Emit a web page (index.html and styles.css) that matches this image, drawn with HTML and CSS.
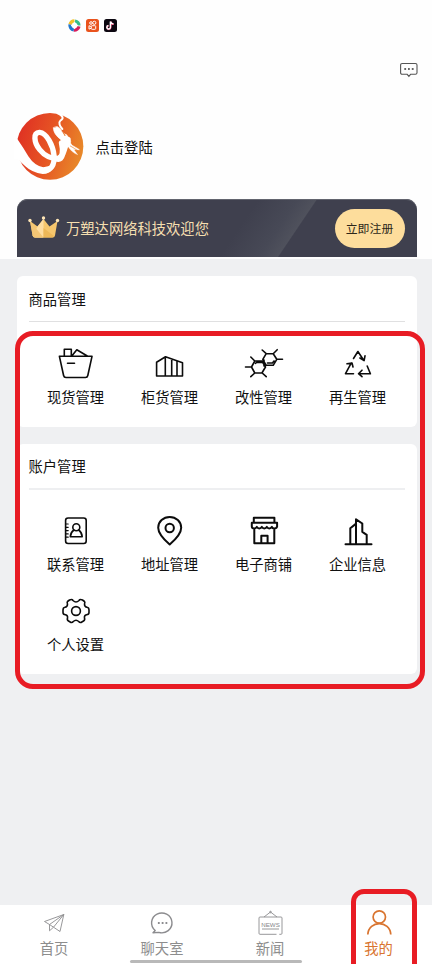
FILE: index.html
```html
<!DOCTYPE html>
<html lang="zh-CN">
<head>
<meta charset="utf-8">
<meta name="viewport" content="width=device-width, initial-scale=1">
<title>我的</title>
<link rel="stylesheet" href="styles.css">
</head>
<body>
<div class="app">
  <header class="top">
    <div class="status">
      <svg width="13" height="13" viewBox="0 0 13 13" fill="none" stroke-width="3.2">
        <path d="M2 5.5A4.8 4.8 0 0 1 6.5 1.9" stroke="#f2c12e"/>
        <path d="M7 2A4.8 4.8 0 0 1 11 6.5" stroke="#35bd8b"/>
        <path d="M11 7.3A4.8 4.8 0 0 1 5.8 11" stroke="#d81f5c"/>
        <path d="M5.8 11A4.8 4.8 0 0 1 2 5.5" stroke="#2176cf"/>
        <path d="M6.500 2.800l3.700 3.700-3.700 3.700-3.700-3.700z" fill="#fff"/>
      </svg>
      <svg width="13" height="13" viewBox="0 0 13 13" fill="none" stroke="#fff">
        <rect width="13" height="13" rx="2.5" fill="#e9531d" stroke="none"/>
        <circle cx="5" cy="4" r="1.3"/><circle cx="8.3" cy="3.8" r="1.6"/>
        <rect x="5.3" y="6.7" width="4.4" height="3.6" rx=".8"/><path d="M5 7.5l-2-.8v3.4l2-.8"/>
      </svg>
      <svg width="13" height="13" viewBox="0 0 13 13" fill="none">
        <rect width="13" height="13" rx="2.5" fill="#0c0710"/>
        <path d="M6.4 2.5v5.8a1.8 1.8 0 1 1-2-1.8M6.6 2.6q.5 2 2.8 2.3" stroke="#e6396a" stroke-width="1.5" transform="translate(.4 .3)"/>
        <path d="M6.4 2.5v5.8a1.8 1.8 0 1 1-2-1.8M6.6 2.6q.5 2 2.8 2.3" stroke="#fff" stroke-width="1.5"/>
      </svg>
    </div>
    <svg class="message" width="20" height="16" viewBox="0 0 20 16" fill="none" stroke="#555" stroke-width="1.1">
      <path d="M3.2 1.5h13.2q1.6 0 1.6 1.6v7.6q0 1.6-1.6 1.6h-4.8l-1.7 2-1.7-2h-5q-1.6 0-1.6-1.6V3.1q0-1.6 1.6-1.6z"/>
      <path d="M5.3 7h1.8M9 7h1.8M12.8 7h1.8" stroke="#333" stroke-width="1.6"/>
    </svg>
    <div class="profile">
      <svg width="72" height="72" viewBox="0 0 216 216">
        <defs>
          <linearGradient id="flame" x1="0" y1=".3" x2="1" y2=".6"><stop offset="0" stop-color="#df3023"/><stop offset=".5" stop-color="#e65524"/><stop offset="1" stop-color="#e88a29"/></linearGradient>
        </defs>
        <circle cx="108" cy="109" r="100" fill="url(#flame)"/>
        <g fill="none" stroke="#fff" stroke-linecap="round" stroke-linejoin="round">
          <path d="M0 70L10 87Q28 113 43 139Q62 168 88 172L106 168L116 174Q108 192 86 192Q54 188 34 169Q20 157 12 147L0 148z" fill="#fff" stroke="none"/>
          <path d="M86 181C111 184 123 164 120 136C117 106 98 69 77 67C56 66 60 98 77 119C91 137 113 148 133 145C151 139 151 111 162 88" stroke-width="16"/>
          <path d="M127 146C149 154 148 119 143 99" stroke-width="17"/>
          <path d="M118 54C119 69 128 79 141 89L146 103L161 89L158 75L145 68L139 56L130 50z" fill="#fff" stroke-width="2"/>
          <path d="M130 9C151 19 148 27 139 32C133 37 137 49 145 57" stroke-width="6"/>
          <path d="M158 75L170 93C167 107 181 108 196 119C178 120 167 115 157 104Z" fill="#fff" stroke-width="2"/>
          <path d="M160 106Q173 129 191 134Q179 115 166 106" fill="#fff" stroke-width="1"/>
          <path d="M149 70L153 77" stroke="#e97927" stroke-width="3"/>
          <path d="M169 108Q182 115 191 122" stroke="#e97927" stroke-width="2"/>
        </g>
      </svg>
      <span class="login">点击登陆</span>
    </div>
    <section class="banner">
      <svg class="crown" width="32" height="24" viewBox="0 0 32 24">
        <path d="M2 5l7.5 5.5L15.5 3l6 7.5L29.500 5 27 19.500q-.5 2-2 2H7q-2 0-2.400-2z" fill="#f6c66d"/>
        <path d="M15.500 3v18.500H7q-2 0-2.400-2L9.500 10.500z" fill="#ffdda0"/>
        <path d="M15.500 12l10.500 8-1.500 1.500h-9z" fill="#eeb858"/>
        <path d="M2 5l13.500 16.500H7q-2 0-2.400-2z" fill="#f4c675"/>
        <g fill="#ffe6b6"><circle cx="2" cy="4.500" r="1.700"/><circle cx="15.500" cy="2" r="1.700"/><circle cx="29.500" cy="4.500" r="1.700"/></g>
      </svg>
      <span class="welcome">万塑达网络科技欢迎您</span>
      <button class="register">立即注册</button>
    </section>
  </header>

  <main class="content">
    <section class="card goods">
      <h2>商品管理</h2>
      <div class="grid">
        <a class="item"><svg class="icon" viewBox="0 0 40 40"><path d="M3.400 12.300H36L31.800 31.500q-.4 2-2.300 2H10q-2 0-2.400-2zM8.300 12V5.300h7V12M15.800 12l5-6.200 10.500 6.200M11.500 19.200h7"/></svg>现货管理</a>
        <a class="item"><svg class="icon" viewBox="0 0 40 40"><path d="M6.600 18.300l8.900-5.500 17 6V32H6.600zM15.300 13v19M21.700 15v17M27 17v15"/></svg>柜货管理</a>
        <a class="item"><svg class="icon" viewBox="0 0 40 40"><path d="M7.500 23l3.300-6h7.100l3.600 6-3.600 6h-7.100zM18.800 15.300l3.400-5.600h7l3.600 5.600-3.600 6h-7zM1.500 23h6M10.800 17l-4-4M10.800 29l-4 3.700M18.200 29l4 3.700M32.800 15.300h5.700M22.200 9.700l-4-3.700M29.200 9.700l4-4M11.500 19.300l1-.8h5.200M23.500 19h5l1.500-2M20 16v6"/></svg>改性管理</a>
        <a class="item"><svg class="icon" viewBox="0 0 40 40"><path d="M15.500 14.500l4.400-7 6 9M21.900 14l4.200 2.600.9-4.700M15.500 29.700h-8l5.700-10.500M9 19.800l5-.8 1 4M29.200 22l3.200 7.700H21M24 26.200l-3.500 3.500 3.500 3"/></svg>再生管理</a>
      </div>
    </section>

    <section class="card account">
      <h2>账户管理</h2>
      <div class="grid">
        <a class="item"><svg class="icon" viewBox="0 0 40 40"><rect x="9.600" y="7" width="20.600" height="25.500" rx="2.500"/><circle cx="20.300" cy="16.300" r="3.500"/><path d="M17.800 19q-3.300 2.500-3.500 6.800H26.200q-.2-4.300-3.500-6.800"/><path d="M9.500 13h2.700M9.500 16.300h2.700M9.500 19.600h2.700M9.500 22.900h2.700M9.500 26.200h2.700" stroke-width="1.200"/></svg>联系管理</a>
        <a class="item"><svg class="icon bold" viewBox="0 0 40 40"><path d="M19.700 33.500Q8.200 23.500 8.200 16.700a11.500 10.800 0 0 1 23 0Q31.200 23.500 19.700 33.500z"/><circle cx="19.700" cy="17" r="4.200"/></svg>地址管理</a>
        <a class="item"><svg class="icon bold" viewBox="0 0 40 40"><path d="M9.800 11.500V6.800h20.600v4.700M7.800 11.700h25.300v3.800q-.5 2-2.800 2-2 0-2.500-1.600-.8 1.600-2.500 1.600t-2.500-1.600q-.8 1.600-2.500 1.600t-2.500-1.600q-.8 1.600-2.500 1.600t-2.500-1.600q-.8 1.600-2.500 1.600-2.500 0-2.500-2zM10.300 17.500v14.700h20V17.500M17.300 32v-7.300h6.300V32"/></svg>电子商铺</a>
        <a class="item"><svg class="icon bold" viewBox="0 0 40 40"><path d="M7.500 33.200h26M12.300 33V17.200l5.500-4.300M18 33V8.300l6.300 4.200v8.300l4.400 3V33"/></svg>企业信息</a>
        <a class="item"><svg class="icon" viewBox="0 0 40 40"><circle cx="20" cy="20" r="4.400"/><path d="M17 9.500Q20 12.500 23 9.500Q24 7.700 26.500 9L28.500 10.500Q29.200 11.500 28.500 13Q28.500 16 31 16.200Q33 16.500 33 19V21.500Q33 23.500 30.500 23.800Q28 24.500 28.500 27Q29.200 29 27.500 30L25 31.500Q23.700 31.800 22.700 30.500Q20 28 17.300 30.500Q16.300 31.800 15 31.500L12.500 30Q10.800 29 11.500 27Q12 24.500 9.500 23.800Q7 23.500 7 21.500V19Q7 16.500 9 16.200Q11.500 16 11.500 13Q10.800 11.500 11.500 10.500L13.500 9Q16 7.700 17 9.500z"/></svg>个人设置</a>
      </div>
    </section>
  </main>

  <nav class="tabs">
    <a class="tab"><svg class="tab-icon fine" viewBox="0 0 30 30"><path d="M5.500 13.500L24.800 6.500 21 23.500l-6.500-4.300-4-2.700zM24.800 6.500l-14.300 10v6.300l4-3.600M24.800 6.500l-10.300 12.700"/></svg>首页</a>
    <a class="tab"><svg class="tab-icon" viewBox="0 0 30 30"><path d="M8.200 22.500a10.200 9.900 0 1 1 3.600 1.900l-5.800.3z"/><path d="M10.900 15h1.800M14.700 15h1.800M18.500 15h1.800" stroke-width="1.800"/></svg>聊天室</a>
    <a class="tab"><svg class="tab-icon fine" viewBox="0 0 30 30"><path d="M21.500 26.300H5q-1 0-1-1V10q0-1 1-1h21q1 0 1 1v15.300q0 1-1 1h-1.700M9 9l6.500-5 6.500 5M7 21h17"/><circle cx="15.500" cy="4" r=".8"/><text x="15.500" y="19.200">NEWS</text></svg>新闻</a>
    <a class="tab active"><svg class="tab-icon" viewBox="0 0 30 30"><circle cx="15.300" cy="9" r="6.200"/><path d="M3.800 26.500C4.600 12 26 12 26.800 26.500"/></svg>我的</a>
  </nav>

  <div class="home-bar"></div>
  <div class="mark mark-panels"></div>
  <div class="mark mark-tab"></div>
</div>
</body>
</html>
```
FILE: styles.css
```css
* { box-sizing: border-box; }
body {
  margin: 0;
  font-family: "Noto Sans CJK SC", sans-serif;
  font-size: 14.3px;
  line-height: 20px;
  color: #111;
}
svg { display: block; flex: none; }
.app {
  position: relative;
  display: flex;
  flex-direction: column;
  height: 964px;
  overflow: hidden;
  background: #eff0f2;
}
.top {
  display: flex;
  flex-direction: column;
  height: 259px;
  padding-top: 19px;
  background: #fefefe;
}
.status { display: flex; gap: 5px; height: 13px; margin-left: 68px; }
.message { align-self: flex-end; margin: 30px 13px 0 0; }
.profile { display: flex; align-items: center; gap: 9.500px; margin: 32px 0 0 14px; }
.login { margin-top: 1px; }
.banner {
  display: flex;
  align-items: center;
  height: 58px;
  margin: 17px 15.500px 0 16.500px;
  padding: 0 12px 0 11px;
  border-radius: 11px 11px 0 0;
  background: linear-gradient(124deg, #3f404e 0 55%, #474956 64%, #4f515c 68.200%, #3f404e 68.500%);
  box-shadow: inset 0 1px 0 #62646e;
}
.welcome { margin-left: 6.500px; color: #f5dfb0; }
.register {
  width: 70px;
  height: 39px;
  margin-left: auto;
  padding: 0 0 1px;
  border: 0;
  border-radius: 20px;
  background: #fddd9c;
  color: #2c2719;
  font: 11.900px/20px "Noto Sans CJK SC", sans-serif;
}
.content { flex: 1; padding: 17px 15.500px 0 16.500px; }
.card { padding: 0 12px; border-radius: 6px; background: #fff; }
.card h2 {
  height: 46px;
  margin: 0;
  padding-top: 13px;
  border-bottom: 1px solid #e0e0e1;
  font-size: 14.300px;
  font-weight: 400;
  line-height: 20px;
}
.goods { height: 151px; }
.account { height: 230px; margin-top: 17px; }
.account h2 { padding-top: 12px; border-bottom: 2px solid #eeeff1; }
.grid { display: grid; grid-template-columns: repeat(4, 94px); padding-top: 22px; }
.account .grid { padding-top: 21px; row-gap: 17px; }
.item { display: flex; flex-direction: column; align-items: center; height: 63px; }
.item .icon { margin-bottom: 3px; }
.icon {
  width: 40px;
  height: 40px;
  fill: none;
  stroke: #0c0c0c;
  stroke-width: 1.600;
  stroke-linejoin: round;
  stroke-linecap: round;
}
.icon.bold { stroke-width: 2; }
.tabs {
  display: grid;
  grid-template-columns: repeat(4, 1fr);
  height: 59px;
  background: #fff;
}
.tab { display: flex; flex-direction: column; align-items: center; padding-top: 3px; color: #8d8d8d; }
.tab-icon {
  width: 30px;
  height: 30px;
  fill: none;
  stroke: #8c8c8f;
  stroke-width: 1.400;
  stroke-linejoin: round;
}
.tab-icon.fine { stroke-width: .9; }
.tab-icon text {
  fill: #858589;
  stroke: none;
  font: 6.200px "Liberation Sans", sans-serif;
  text-anchor: middle;
}
.active { padding-left: 1px; color: #d9742f; }
.active .tab-icon { stroke: #d9742f; stroke-width: 1.700; }
.home-bar {
  position: absolute;
  left: 130px;
  bottom: 1px;
  width: 172px;
  height: 3px;
  border-radius: 2px;
  background: #b9b9b9;
}
.mark { position: absolute; border: 5px solid #e81c24; }
.mark-panels { left: 15px; top: 331px; width: 410px; height: 358px; border-radius: 18px; }
.mark-tab { left: 351px; top: 889px; width: 66px; height: 90px; border-radius: 13px; }
```
